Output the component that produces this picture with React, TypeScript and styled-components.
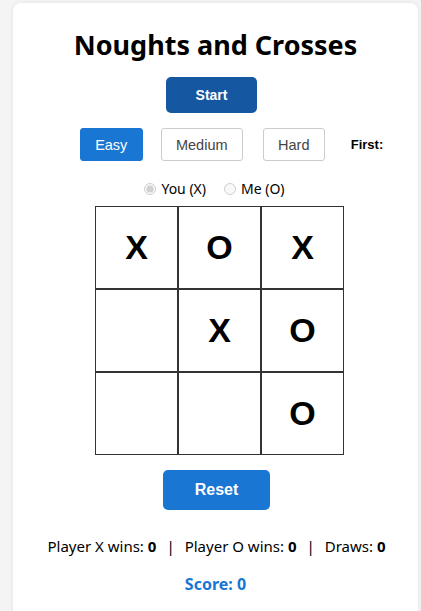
import React from "react";
import styled, { createGlobalStyle } from "styled-components";

const Global = createGlobalStyle`
  html, body { margin: 0; padding: 0; background: #f4f4f4; }
  body { font-family: "Segoe UI", "Noto Sans", sans-serif; }
  * { box-sizing: border-box; }
`;

const Page = styled.div`
  padding: 3px 3px 0 13px;
`;

const Card = styled.div`
  background: #fff;
  border-radius: 8px;
  box-shadow: 0 0 4px rgba(0,0,0,0.08);
  padding: 24px 0 16px;
  display: flex;
  flex-direction: column;
  align-items: center;
  min-height: 620px;
`;

const Title = styled.h1`
  margin: 0;
  font-size: 27px;
  font-weight: 700;
  color: #000;
  line-height: 36px;
`;

const ButtonSlot = styled.div<{ $top: number; $shift: number }>`
  margin-top: ${p => p.$top}px;
  margin-left: ${p => (p.$shift > 0 ? p.$shift * 2 : 0)}px;
  margin-right: ${p => (p.$shift < 0 ? -p.$shift * 2 : 0)}px;
`;

const PrimaryButton = styled.button<{ $w: number; $h: number; $bg: string; $fs: number }>`
  width: ${p => p.$w}px;
  height: ${p => p.$h}px;
  background: ${p => p.$bg};
  color: #fff;
  border: none;
  border-radius: 5px;
  font-family: "Liberation Sans", Arial, sans-serif;
  font-weight: 700;
  font-size: ${p => p.$fs}px;
  padding: 0;
`;

const DiffRow = styled.div`
  display: flex;
  align-items: center;
  margin-top: 15px;
  margin-left: 32px;
`;

const DiffButton = styled.button<{ $active?: boolean; $w: number; $gap: number }>`
  width: ${p => p.$w}px;
  height: 33px;
  margin-right: ${p => p.$gap}px;
  border: 1px solid ${p => (p.$active ? "#1976d2" : "#ccc")};
  background: ${p => (p.$active ? "#1976d2" : "#fff")};
  color: ${p => (p.$active ? "#fff" : "#444")};
  border-radius: 3px;
  font-family: "Liberation Sans", Arial, sans-serif;
  font-size: 14.5px;
  padding: 0;
`;

const FirstLabel = styled.span`
  font-family: "Liberation Sans", Arial, sans-serif;
  font-weight: 700;
  font-size: 13px;
  margin-left: 8px;
  color: #000;
`;

const RadioRow = styled.div`
  display: flex;
  align-items: center;
  margin-top: 18px;
  margin-right: 2px;
  font-size: 14px;
  line-height: 19px;
  color: #000;
  gap: 18px;
`;

const RadioLabel = styled.label`
  display: flex;
  align-items: center;
  color: #000;
`;

const Radio = styled.input`
  margin: 0 5px 0 0;
  width: 12px;
  height: 12px;
`;

const Board = styled.div`
  display: grid;
  grid-template-columns: repeat(3, 83px);
  grid-template-rows: repeat(3, 83px);
  margin-top: 8px;
  margin-left: 8px;
`;

const Cell = styled.div`
  border: 1px solid #333;
  display: flex;
  align-items: center;
  justify-content: center;
  font-family: "Liberation Sans", Arial, sans-serif;
  font-weight: 700;
  font-size: 34px;
  color: #000;
`;

const Stats = styled.div`
  margin-top: 26px;
  font-size: 15px;
  color: #000;
  display: flex;
  align-items: center;
  white-space: pre;
  margin-left: 2px;
`;

const Sep = styled.span`
  color: #000;
  margin: 0 10px;
`;

const Score = styled.div`
  margin-top: 17px;
  color: #1976d2;
  font-weight: 700;
  font-size: 16px;
`;

const board = ["X", "O", "X", "", "X", "O", "", "", "O"];

export default function App() {
  return (
    <>
      <Global />
      <Page>
        <Card>
          <Title>Noughts and Crosses</Title>
          <ButtonSlot $top={14} $shift={-4}>
            <PrimaryButton $w={91} $h={36} $bg="#1557a0" $fs={14}>Start</PrimaryButton>
          </ButtonSlot>
          <DiffRow>
            <DiffButton $active $w={63} $gap={18}>Easy</DiffButton>
            <DiffButton $w={82} $gap={20}>Medium</DiffButton>
            <DiffButton $w={62} $gap={18}>Hard</DiffButton>
            <FirstLabel>First:</FirstLabel>
          </DiffRow>
          <RadioRow>
            <RadioLabel><Radio type="radio" name="first" defaultChecked disabled />You (X)</RadioLabel>
            <RadioLabel><Radio type="radio" name="first" disabled />Me (O)</RadioLabel>
          </RadioRow>
          <Board>
            {board.map((v, i) => <Cell key={i}>{v}</Cell>)}
          </Board>
          <ButtonSlot $top={15} $shift={1}>
            <PrimaryButton $w={107} $h={40} $bg="#1976d2" $fs={16}>Reset</PrimaryButton>
          </ButtonSlot>
          <Stats>
            <span>Player X wins: <b>0</b></span>
            <Sep>|</Sep>
            <span>Player O wins: <b>0</b></span>
            <Sep>|</Sep>
            <span>Draws: <b>0</b></span>
          </Stats>
          <Score>Score: 0</Score>
        </Card>
      </Page>
    </>
  );
}
